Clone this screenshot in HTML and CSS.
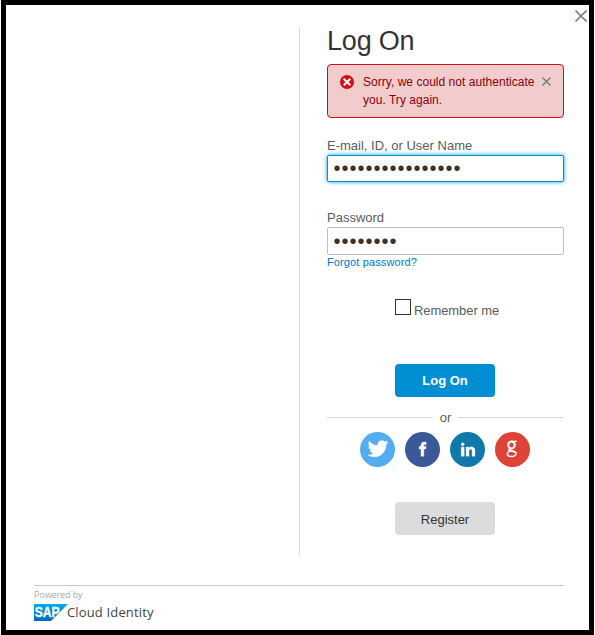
FILE: index.html
```html
<!DOCTYPE html>
<html lang="en">
<head>
<meta charset="utf-8">
<title>Log On</title>
<link rel="stylesheet" href="styles.css">
</head>
<body>
<main class="dialog">
  <button class="close" aria-label="Close"><svg width="12" height="12" viewBox="0 0 12 12"><path d="M.5.5l11 11M11.5.5l-11 11"/></svg></button>
  <section class="panel">
    <form class="form">
      <h1 class="title">Log On</h1>
      <div class="alert">
        <svg class="alert-icon" width="14" height="14" viewBox="0 0 14 14"><circle cx="7" cy="7" r="7" fill="#d40d12"/><path d="M3.7 3.7l6.6 6.6M10.3 3.7l-6.6 6.6" stroke="#fff" stroke-width="2"/></svg>
        <p class="alert-text">Sorry, we could not authenticate<br><span class="alert-second">you. Try again.</span></p>
        <svg class="alert-close" width="9" height="9" viewBox="0 0 9 9"><path d="M.5.5l8 8M8.5.5l-8 8"/></svg>
      </div>
      <label class="label label-user" for="user">E-mail, ID, or User Name</label>
      <input class="field field-active" id="user" type="password" value="1234567890123456">
      <label class="label label-pass" for="pass">Password</label>
      <input class="field" id="pass" type="password" value="12345678">
      <a class="forgot">Forgot password?</a>
      <div class="remember"><span class="box"></span><span class="remember-text">Remember me</span></div>
      <button class="button primary" type="button"><span>Log On</span></button>
      <div class="or"><span>or</span></div>
      <div class="social">
        <svg width="35" height="35" viewBox="0 0 35 35"><circle cx="17.5" cy="17.5" r="17.5" fill="#55acee"/><path transform="translate(7.9 6.6) scale(.84)" fill="#fff" stroke="#fff" stroke-width=".4" d="M23.95 4.57a10 10 0 0 1-2.82.77 4.96 4.96 0 0 0 2.16-2.72c-.95.55-2 .95-3.13 1.18a4.92 4.92 0 0 0-8.38 4.48C7.69 8.1 4.07 6.13 1.64 3.16a4.92 4.92 0 0 0 1.52 6.57 4.9 4.9 0 0 1-2.23-.61v.06c0 2.38 1.7 4.37 3.95 4.82a5 5 0 0 1-2.21.09 4.94 4.94 0 0 0 4.6 3.42A9.87 9.87 0 0 1 0 19.54a13.99 13.99 0 0 0 7.56 2.21c9.05 0 14-7.5 14-13.98l-.02-.63a9.94 9.94 0 0 0 2.41-2.57z"/></svg>
        <svg width="35" height="35" viewBox="0 0 35 35"><circle cx="17.5" cy="17.5" r="17.5" fill="#3b5998"/><path fill="#fff" stroke="#fff" stroke-width=".4" d="M16 24.2v-7.2h-1.9v-2.5H16v-1.2c0-2.1 1.1-3.3 3.1-3.3h2v2.5h-1.2c-.8 0-1.1.3-1.1 1v1h2.3l-.3 2.5h-2v7.2z"/></svg>
        <svg width="35" height="35" viewBox="0 0 35 35"><circle cx="17.5" cy="17.5" r="17.5" fill="#1178ab"/><circle cx="12.7" cy="12.2" r="1.7" fill="#fff"/><path fill="#fff" stroke="#fff" stroke-width=".3" d="M11.2 15h3v9.2h-3zM16.1 15h2.8v1.2c1.6-2.3 6.1-1.8 6.1 2.4v5.6h-2.9v-5c0-2.7-3.1-2.4-3.1 0v5h-2.9z"/></svg>
        <svg width="35" height="35" viewBox="0 0 35 35"><circle cx="17.5" cy="17.5" r="17.5" fill="#dd4337"/><g fill="none" stroke="#fff"><ellipse cx="16.5" cy="12.9" rx="3.3" ry="3.5" stroke-width="2"/><path d="M16 9.4h6M18.4 9.7c1.3 1.1 1.5 2.2 1.3 3.4" stroke-width="1.2"/><path d="M15.3 16c-1.8 1-1.1 2.2.7 2.7 2 .5 4.6 1 4.9 2.6" stroke-width="2"/><path d="M15.8 18.8c-4.5.9-4.8 5.7.5 5.7 3.3 0 5-1.6 4.6-3.4" stroke-width="1.5"/></g></svg>
      </div>
      <button class="button register" type="button"><span>Register</span></button>
    </form>
  </section>
  <footer class="footer">
    <p class="powered"><span>Powered by</span></p>
    <div class="brand">
      <svg width="34" height="17" viewBox="0 0 34 17"><defs><linearGradient id="sap" x1="0" y1="0" x2="0" y2="1"><stop offset="0" stop-color="#00aeef"/><stop offset="1" stop-color="#0568bd"/></linearGradient></defs><path fill="url(#sap)" d="M0 0h34L17 17H0z"/><text class="sap-text" x="0.7" y="13" textLength="25" lengthAdjust="spacingAndGlyphs">SAP</text></svg>
      <span class="brand-name">Cloud Identity</span>
    </div>
  </footer>
</main>
</body>
</html>
```
FILE: styles.css
```css
* { box-sizing: border-box; }
body { margin: 0; background: #fff; font-family: "Liberation Sans", Arial, sans-serif; font-size: 13px; color: #5c5c5c; }
h1, p { margin: 0; font-weight: normal; }
svg { display: block; flex: none; }
button { border: 0; padding: 0; font: inherit; }
.dialog { position: relative; width: 593px; height: 635px; margin-left: 1px; padding: 22px 25px 0 28px; border: 5px solid #000; background: #fff; }
.close { position: absolute; top: 5px; right: 2px; background: none; }
.close path { fill: none; stroke: #808080; stroke-width: 1.6; }
.panel { width: 265px; height: 528px; margin-left: auto; padding-left: 27px; border-left: 1px solid #d9d9d9; }
.form { display: flex; flex-direction: column; width: 237px; }
.title { height: 37px; font-size: 27px; line-height: 28px; letter-spacing: -.2px; color: #333; }
.alert { display: flex; height: 54px; padding: 8px 11px 0 12px; border: 1px solid #d40d12; border-radius: 4px; background: #f2cccc; color: #8b000c; }
.alert-icon { margin: 2px 9px 0 0; }
.alert-text { width: 175px; font-size: 12px; line-height: 18px; letter-spacing: .03px; white-space: nowrap; }
.alert-close { margin: 4px 0 0 4px; }
.alert-close path { stroke: #777; stroke-width: 1.4; }
.label { height: 18px; line-height: 18px; }
.label-user { margin-top: 19px; }
.label-pass { margin-top: 27px; }
.field { width: 237px; height: 28px; padding: 1px 6px 0 5.5px; border: 1px solid #bfbfbf; border-radius: 2px; outline: 0; background: #fff; color: #333; font: 20px/26px "Liberation Sans", sans-serif; letter-spacing: 1px; }
.field-active { height: 27px; padding-top: 0; padding-bottom: 1px; border-color: #008fd3; line-height: 24px; box-shadow: 0 0 4px #009de0; }
.forgot { align-self: flex-start; height: 14px; line-height: 14px; font-size: 11px; letter-spacing: .12px; color: #0076cb; }
.remember { display: flex; align-items: flex-start; margin: 30px 0 0 68px; height: 22px; }
.box { width: 16px; height: 16px; border: 1px solid #333; }
.remember-text { margin: 3px 0 0 3px; line-height: 18px; letter-spacing: -.08px; }
.button { width: 100px; height: 33px; margin-left: 68px; border-radius: 4px; line-height: 33px; }
.primary { margin-top: 43px; background: #008fd3; color: #fff; font-weight: bold; }
.or { display: flex; align-items: center; gap: 7px; height: 20px; margin-top: 10px; }
.or::before, .or::after { content: ""; flex: 1; height: 1px; background: #d9d9d9; }
.social { display: flex; gap: 10px; margin: 5px 0 0 33px; }
.register { margin-top: 35px; padding-top: 1px; background: #dcdcdc; color: #333; }
.footer { width: 530px; margin-top: 30px; border-top: 1px solid #c7c7c7; }
.powered { height: 18px; font: 9px/18px "Open Sans", sans-serif; letter-spacing: -.1px; color: #aaa; }
.brand { display: flex; align-items: center; }
.brand-name { margin-left: -1px; font: 13px/17px "Open Sans", sans-serif; letter-spacing: .15px; color: #444; white-space: nowrap; }
.sap-text { font: bold 14px "Liberation Sans", sans-serif; fill: #fff; stroke: #fff; stroke-width: .3px; }
```
